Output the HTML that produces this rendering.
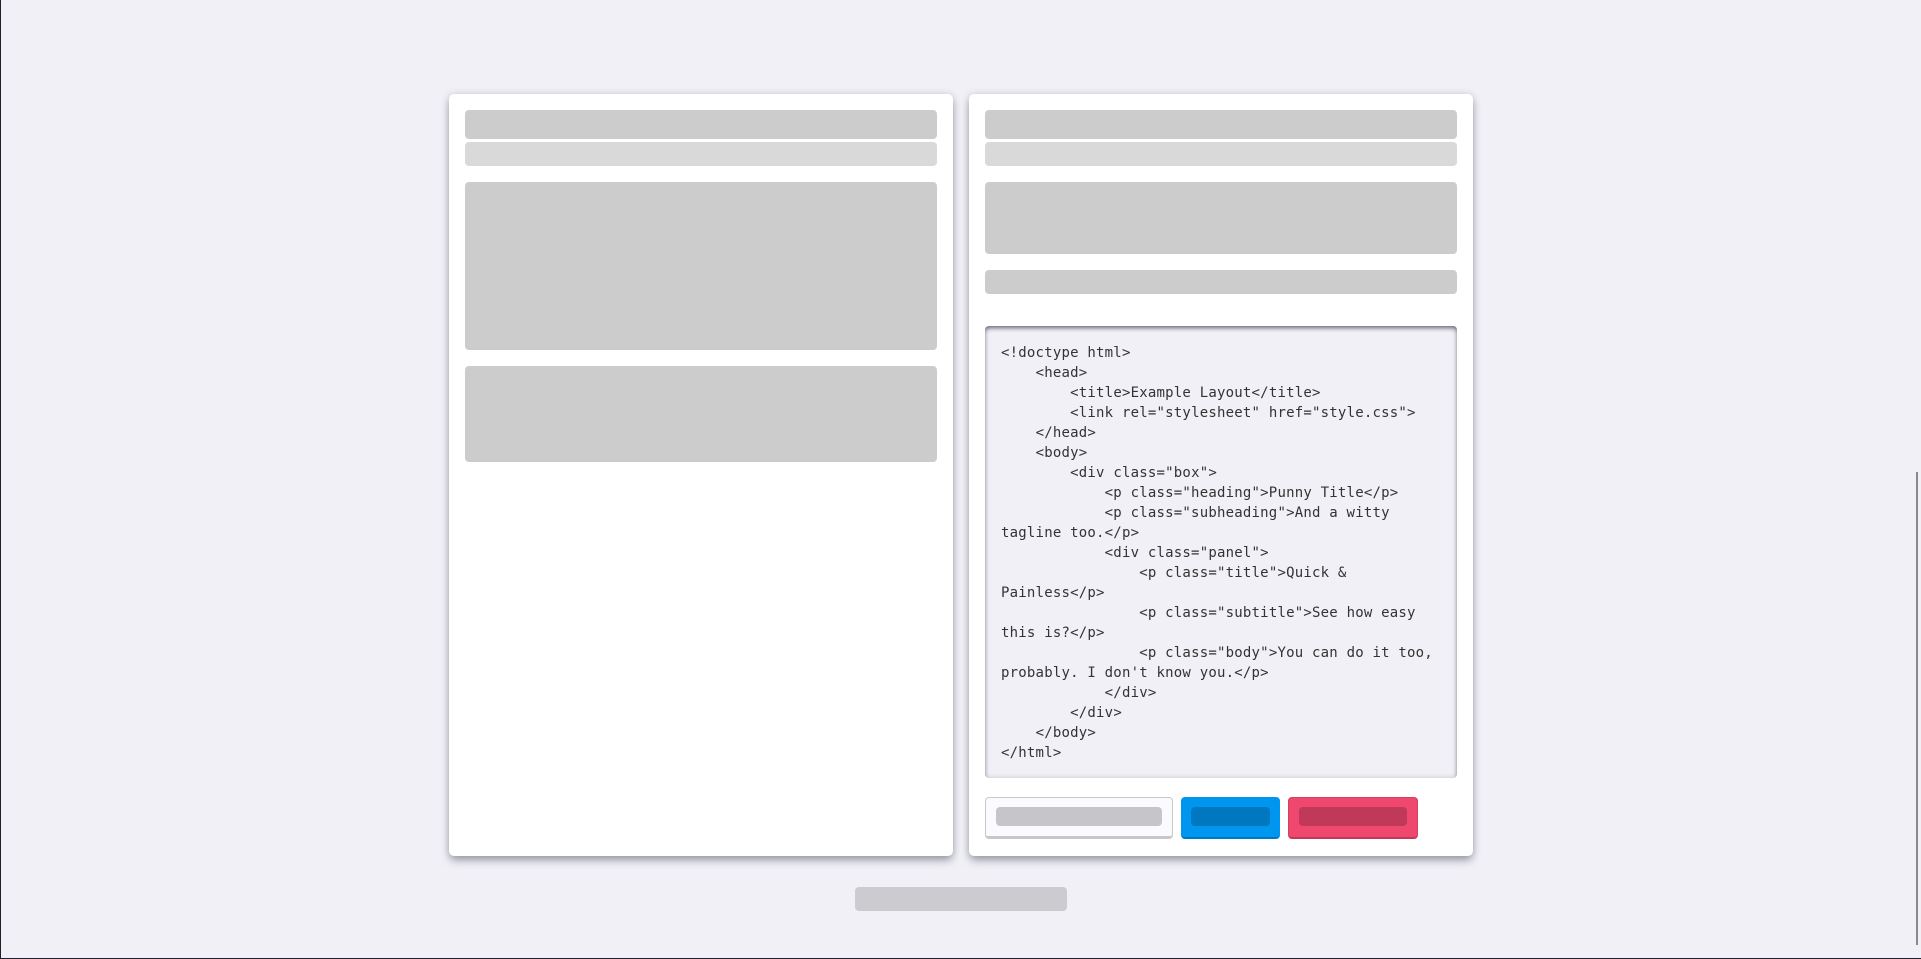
<!DOCTYPE html>
<html><head><meta charset="utf-8"><title>Layout</title>
<style>
html,body{margin:0;padding:0;width:1921px;height:959px;overflow:hidden;background:#f0f0f6}
.a{position:absolute}
.card{position:absolute;top:94px;width:504px;height:762px;background:#fff;border-radius:5px;box-shadow:0 5px 9px -1px rgba(10,10,40,.36),0 0 8px rgba(10,10,40,.12)}
.p{position:absolute;background:#ccc;border-radius:4px}
.l{background:#d9d9d9}
pre{position:absolute;left:985px;top:326px;width:440px;height:419px;margin:0;padding:17px 16px 16px;background:#f0f0f6;border-radius:4px;
box-shadow:inset 0 3px 5px -1px rgba(10,10,40,.55),inset 0 0 6px rgba(10,10,40,.16);
font:14px/20px "DejaVu Sans Mono",monospace;letter-spacing:.21px;color:#333;white-space:pre-wrap;word-break:normal}
.b{position:absolute;top:797px;height:42px;box-sizing:border-box;border-radius:4px}
.i{position:absolute;top:10px;height:19px;border-radius:4px}
</style></head><body>
<div class="a" style="left:0;top:0;width:1px;height:959px;background:#20202c"></div>
<div class="a" style="left:0;top:958px;width:1921px;height:1px;background:#20202c"></div>
<div class="a" style="left:1916px;top:472px;width:2px;height:473px;background:#8a8a8c"></div>
<div class="card" style="left:449px"></div>
<div class="card" style="left:969px"></div>
<div class="p" style="left:465px;top:110px;width:472px;height:29px"></div>
<div class="p l" style="left:465px;top:142px;width:472px;height:24px"></div>
<div class="p" style="left:465px;top:182px;width:472px;height:168px"></div>
<div class="p" style="left:465px;top:366px;width:472px;height:96px"></div>
<div class="p" style="left:985px;top:110px;width:472px;height:29px"></div>
<div class="p l" style="left:985px;top:142px;width:472px;height:24px"></div>
<div class="p" style="left:985px;top:182px;width:472px;height:72px"></div>
<div class="p" style="left:985px;top:270px;width:472px;height:24px"></div>
<pre>&lt;!doctype html&gt;
    &lt;head&gt;
        &lt;title&gt;Example Layout&lt;/title&gt;
        &lt;link rel="stylesheet" href="style.css"&gt;
    &lt;/head&gt;
    &lt;body&gt;
        &lt;div class="box"&gt;
            &lt;p class="heading"&gt;Punny Title&lt;/p&gt;
            &lt;p class="subheading"&gt;And a witty
tagline too.&lt;/p&gt;
            &lt;div class="panel"&gt;
                &lt;p class="title"&gt;Quick &amp;
Painless&lt;/p&gt;
                &lt;p class="subtitle"&gt;See how easy
this is?&lt;/p&gt;
                &lt;p class="body"&gt;You can do it too,
probably. I don't know you.&lt;/p&gt;
            &lt;/div&gt;
        &lt;/div&gt;
    &lt;/body&gt;
&lt;/html&gt;</pre>
<div class="b" style="left:985px;width:188px;background:#fafaff;border:1px solid #c8c8cc;border-bottom-width:3px"><div class="i" style="left:10px;width:166px;top:9px;background:#c6c6ca"></div></div>
<div class="b" style="left:1181px;width:99px;background:#0096f0;border-bottom:2px solid #0078c0"><div class="i" style="left:10px;width:79px;background:#0078c0"></div></div>
<div class="b" style="left:1288px;width:130px;background:#f0476f;border:1px solid #d0405f;border-bottom:2px solid #c03959"><div class="i" style="left:10px;width:108px;top:9px;background:#c03959"></div></div>
<div class="p" style="left:855px;top:887px;width:212px;height:24px;background:#cccbd0"></div>
</body></html>
